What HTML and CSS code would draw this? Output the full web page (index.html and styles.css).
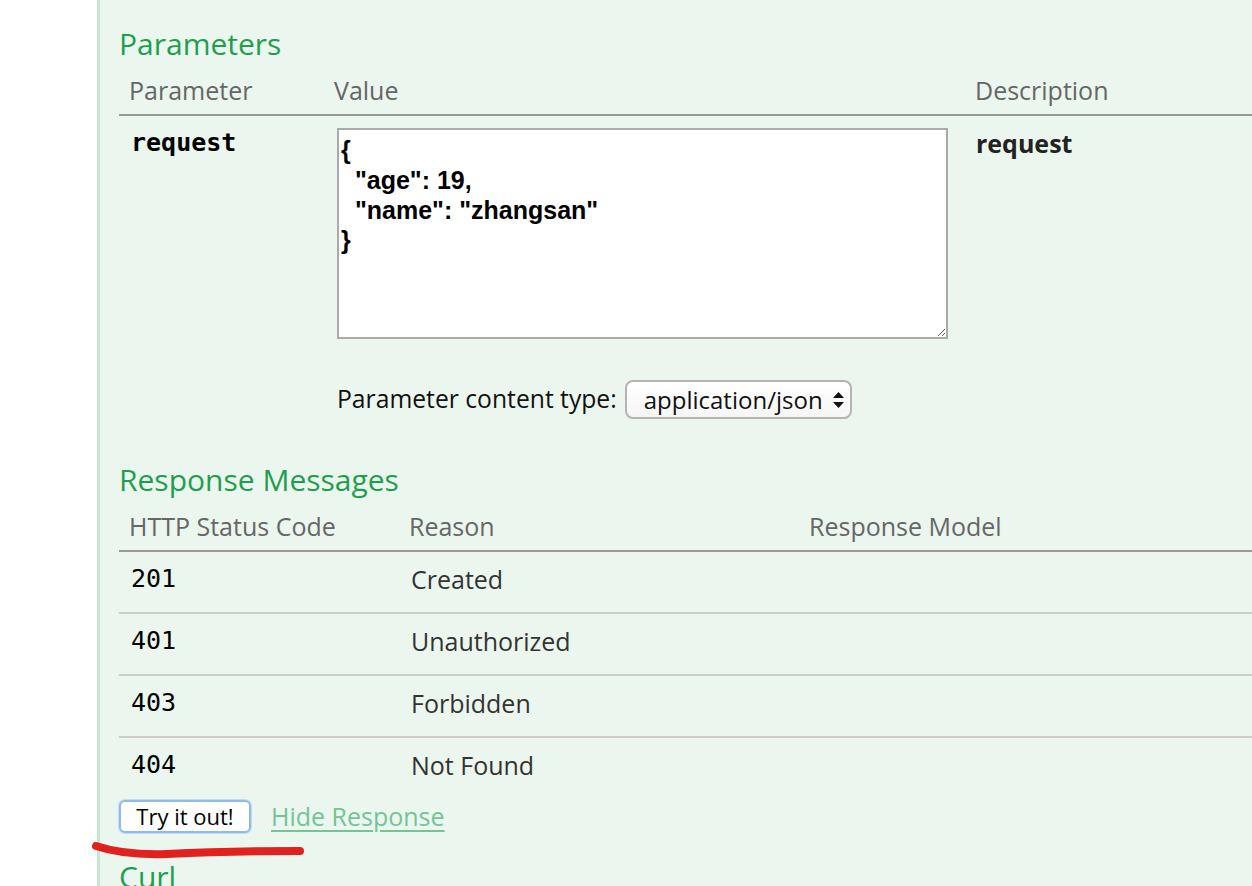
FILE: index.html
```html
<!DOCTYPE html>
<html lang="en">
<head>
<meta charset="utf-8">
<title>Operation</title>
<link rel="stylesheet" href="styles.css">
</head>
<body>
<div class="page">
  <div class="gutter"></div>
  <div class="panel">
    <h4 class="section-title first">Parameters</h4>
    <table class="grid params">
      <colgroup><col class="pc1"><col class="pc2"><col></colgroup>
      <thead>
        <tr><th>Parameter</th><th>Value</th><th>Description</th></tr>
      </thead>
      <tbody>
        <tr>
          <td class="code name-cell">request</td>
          <td class="value-cell">
            <textarea class="body-param" spellcheck="false">{
  "age": 19,
  "name": "zhangsan"
}</textarea>
            <div class="ctype">
              <span class="ctype-label">Parameter content type:</span>
              <div class="select">
                <span>application/json</span>
                <svg class="arrows" width="11" height="16" viewBox="0 0 11 16"><polygon points="5.5,0 0,6 11,6" fill="#111"/><polygon points="0,10 11,10 5.5,16" fill="#111"/></svg>
              </div>
            </div>
          </td>
          <td class="desc-cell">request</td>
        </tr>
      </tbody>
    </table>

    <h4 class="section-title resp">Response Messages</h4>
    <table class="grid responses">
      <colgroup><col class="rc1"><col class="rc2"><col></colgroup>
      <thead>
        <tr><th>HTTP Status Code</th><th>Reason</th><th>Response Model</th></tr>
      </thead>
      <tbody>
        <tr><td class="code">201</td><td class="reason">Created</td><td></td></tr>
        <tr><td class="code">401</td><td class="reason">Unauthorized</td><td></td></tr>
        <tr><td class="code">403</td><td class="reason">Forbidden</td><td></td></tr>
        <tr class="last"><td class="code">404</td><td class="reason">Not Found</td><td></td></tr>
      </tbody>
    </table>

    <div class="actions">
      <button class="try-btn" type="button">Try it out!</button>
      <a class="hider" href="#">Hide Response</a>
    </div>

    <h4 class="section-title curl">Curl</h4>
  </div>

  <svg class="annotation" width="220" height="22" viewBox="0 0 220 22">
    <path d="M4 4 C 22 10, 45 13, 75 12 C 115 10, 150 9, 208 9" fill="none" stroke="#e0211d" stroke-width="8" stroke-linecap="round"/>
  </svg>
</div>
</body>
</html>
```

FILE: styles.css
```css
* { box-sizing: border-box; }

html, body {
  margin: 0;
  padding: 0;
  background: #ffffff;
}

body {
  font-family: "Open Sans", "Noto Sans", sans-serif;
  color: #333333;
  overflow: hidden;
}

.page {
  position: relative;
  display: flex;
  height: 886px;
  overflow: hidden;
}

.gutter {
  width: 97px;
  flex: none;
  background: #ffffff;
}

.panel {
  flex: 1;
  background: #ebf6ef;
  border-left: 3px solid #c3e8d1;
  padding-left: 19px;
  min-width: 0;
}

.section-title {
  margin: 41px 0 0;
  font-size: 30px;
  line-height: 40px;
  font-weight: normal;
  color: #1f9f4e;
}

.section-title.first { margin-top: 24px; }
.section-title.curl { margin-top: 24px; }

.grid {
  width: 100%;
  table-layout: fixed;
  border-collapse: separate;
  border-spacing: 0;
}

.pc1 { width: 205px; }
.pc2 { width: 641px; }
.rc1 { width: 280px; }
.rc2 { width: 400px; }

.grid th {
  text-align: left;
  font-weight: normal;
  font-size: 25px;
  line-height: 34px;
  color: #666666;
  padding: 9px 10px 7px 10px;
  border-bottom: 2px solid #999999;
  white-space: nowrap;
}

.grid td {
  vertical-align: top;
  font-size: 25px;
  line-height: 34px;
  padding: 10px 10px 0 12px;
}

.code {
  font-family: "DejaVu Sans Mono", "Liberation Mono", monospace;
  font-weight: bold;
  color: #000000;
}

.responses .code { font-weight: normal; }

.desc-cell {
  font-weight: bold;
  color: #222222;
  padding-left: 11px !important;
}

.value-cell {
  padding: 12px 10px 0 13px !important;
}

.body-param {
  display: block;
  width: 611px;
  height: 211px;
  margin: 0;
  padding: 5px 2px;
  border: 2px solid #aaaaaa;
  background: #ffffff;
  font-family: "Liberation Sans", Arial, sans-serif;
  font-weight: bold;
  font-size: 25px;
  line-height: 30px;
  color: #000000;
  resize: both;
  outline: none;
}

.ctype {
  margin-top: 41px;
  height: 39px;
  display: flex;
  align-items: center;
  gap: 8px;
}

.ctype-label {
  font-size: 24.7px;
  line-height: 34px;
  color: #111111;
  white-space: nowrap;
  position: relative;
  top: -1px;
}

.select {
  height: 39px;
  display: flex;
  align-items: center;
  gap: 10px;
  padding: 0 6px 0 17px;
  border: 2px solid #b4b4b4;
  border-radius: 8px;
  background: linear-gradient(#ffffff, #f6f6f6);
  font-size: 24px;
  color: #111111;
  white-space: nowrap;
}

.arrows { display: block; }

.responses tbody td {
  height: 62px;
  padding-top: 10px;
  padding-bottom: 16px;
  border-bottom: 2px solid #cccccc;
}

.responses tbody tr.last td { border-bottom: none; height: 60px; }

.reason { color: #333333; }

.actions {
  margin-top: 1px;
  display: flex;
  align-items: center;
  gap: 20px;
}

.try-btn {
  width: 132px;
  height: 33px;
  padding: 0;
  background: #ffffff;
  border: 2px solid #8fbbea;
  border-radius: 6px;
  box-shadow: 0 0 0 1px #c4dbf3;
  font-family: "Open Sans", "Noto Sans", sans-serif;
  font-size: 22px;
  line-height: 29px;
  color: #000000;
}

.hider {
  font-size: 25px;
  line-height: 34px;
  color: #74c496;
  text-decoration: underline;
  text-underline-offset: 4px;
}

.annotation {
  position: absolute;
  left: 92px;
  top: 842px;
  pointer-events: none;
}
```
